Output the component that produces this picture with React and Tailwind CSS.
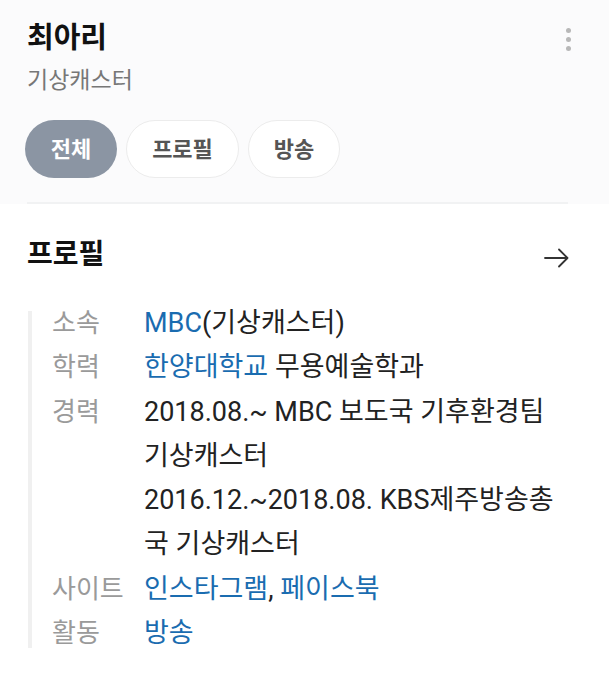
import React from "react";

const font = { fontFamily: '"Roboto", "Noto Sans CJK KR", sans-serif' };

function Row({ label, children }) {
  return (
    <div className="flex">
      <div className="w-[92px] shrink-0 text-[#9a9a9a] text-[26px]">{label}</div>
      <div className="w-[415px] text-[#222] text-[27px]">{children}</div>
    </div>
  );
}

export default function App() {
  return (
    <div className="w-[609px] h-[676px] bg-white overflow-hidden" style={font}>
      <div className="bg-[#fbfbfc] pl-[27px] pr-[41px] pt-[17px]">
        <div className="flex items-start justify-between">
          <div className="text-[29px] leading-[42px] font-bold text-[#111]">최아리</div>
          <div className="flex flex-col gap-[4px] pt-[11px] mr-[-3px]">
            <span className="block w-[5px] h-[5px] rounded-full bg-[#b8b8b8]" />
            <span className="block w-[5px] h-[5px] rounded-full bg-[#b8b8b8]" />
            <span className="block w-[5px] h-[5px] rounded-full bg-[#b8b8b8]" />
          </div>
        </div>
        <div className="text-[23px] leading-[32px] text-[#777] mt-[6px]">기상캐스터</div>
        <div className="flex gap-[9px] mt-[23px] ml-[-2px]">
          <div className="h-[58px] w-[92px] rounded-full bg-[#8b95a3] text-white text-[22px] font-bold flex items-center justify-center">전체</div>
          <div className="h-[58px] w-[113px] rounded-full bg-white border border-[#ececec] text-[#555] text-[22px] font-bold flex items-center justify-center">프로필</div>
          <div className="h-[58px] w-[92px] rounded-full bg-white border border-[#ececec] text-[#555] text-[22px] font-bold flex items-center justify-center">방송</div>
        </div>
        <div className="h-[24px]" />
        <div className="h-[2px] bg-[#f1f2f3]" />
      </div>
      <div className="pl-[27px] pr-[39px]">
        <div className="flex items-center justify-between mt-[33px]">
          <div className="text-[28px] leading-[36px] font-bold text-[#111]">프로필</div>
          <svg width="28" height="28" viewBox="0 0 28 28" fill="none" stroke="#333" strokeWidth="1.8" strokeLinecap="round" strokeLinejoin="round" className="mt-[6px]">
            <path d="M3 14 H25" />
            <path d="M17 5.5 L25.5 14 L17 22.5" />
          </svg>
        </div>
        <div className="flex mt-[28px] leading-[44.3px]">
          <div className="w-[4px] shrink-0 bg-[#f0f0f0] ml-[1px] mt-[10px] mb-[7px]" />
          <div className="pl-[20px]">
            <Row label="소속">
              <span className="text-[#1a6cb0]">MBC</span>(기상캐스터)
            </Row>
            <Row label="학력">
              <span className="text-[#1a6cb0]">한양대학교</span> 무용예술학과
            </Row>
            <Row label="경력">
              <div>2018.08.~ MBC 보도국 기후환경팀 기상캐스터</div>
              <div>2016.12.~2018.08. KBS제주방송총국 기상캐스터</div>
            </Row>
            <Row label="사이트">
              <span className="text-[#1a6cb0]">인스타그램</span>, <span className="text-[#1a6cb0]">페이스북</span>
            </Row>
            <Row label="활동">
              <span className="text-[#1a6cb0]">방송</span>
            </Row>
          </div>
        </div>
      </div>
    </div>
  );
}
